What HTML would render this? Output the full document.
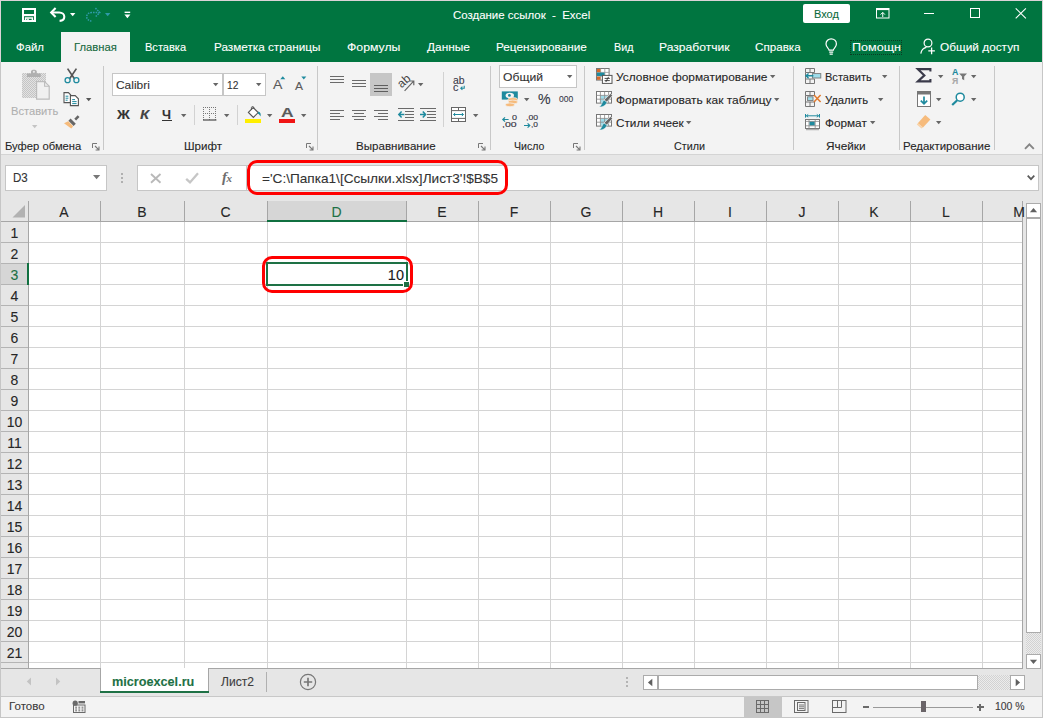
<!DOCTYPE html><html lang="ru"><head><meta charset="utf-8"><title>Создание ссылок - Excel</title><style>
*{box-sizing:border-box;margin:0;padding:0}
html,body{width:1043px;height:718px;overflow:hidden;background:#e6e6e6;font-family:"Liberation Sans","DejaVu Sans",sans-serif;font-size:12px;color:#262626}
#w{position:absolute;left:0;top:0;width:1043px;height:718px;overflow:hidden;background:#e6e6e6}
.a{position:absolute}
.t{position:absolute;white-space:pre;line-height:1;transform-origin:0 50%;-webkit-text-stroke:0.1px currentColor}
svg{position:absolute;overflow:visible}
</style></head><body><div id="w">
<div class="a" style="left:0px;top:0px;width:1043px;height:62px;background:#007540;"></div>
<div class="a" style="left:61px;top:32px;width:69px;height:30px;background:#f3f3f3;"></div>
<div class="a" style="left:0px;top:62px;width:1043px;height:92px;background:#f3f3f3;"></div>
<div class="a" style="left:0px;top:154px;width:1043px;height:1px;background:#d4d4d4;"></div>
<div class="a" style="left:103px;top:66px;width:1px;height:84px;background:#c8c8c8;"></div>
<div class="a" style="left:317px;top:66px;width:1px;height:84px;background:#c8c8c8;"></div>
<div class="a" style="left:490px;top:66px;width:1px;height:84px;background:#c8c8c8;"></div>
<div class="a" style="left:584px;top:66px;width:1px;height:84px;background:#c8c8c8;"></div>
<div class="a" style="left:793px;top:66px;width:1px;height:84px;background:#c8c8c8;"></div>
<div class="a" style="left:899px;top:66px;width:1px;height:84px;background:#c8c8c8;"></div>
<div class="a" style="left:994px;top:66px;width:1px;height:84px;background:#c8c8c8;"></div>
<svg style="left:22px;top:8px" width="14" height="14"><path d="M1 1H13V13H1Z" fill="none" stroke="#fff" stroke-width="2"/><rect x="1" y="6" width="12" height="2.2" fill="#fff"/><path d="M3.6 13V10H10.4V13" fill="none" stroke="#fff" stroke-width="1.5"/><rect x="5.2" y="10.6" width="1.6" height="2.4" fill="#fff"/></svg>
<svg style="left:50px;top:7px" width="16" height="15"><path d="M1.2 5.5H9.2C12.4 5.5 14.3 7.5 14.3 9.8C14.3 12.1 12.6 13.7 9.6 13.9" fill="none" stroke="#fff" stroke-width="2.1"/><path d="M5.6 1.1L1.2 5.5L5.6 9.9" fill="none" stroke="#fff" stroke-width="2.1"/></svg>
<svg style="left:70px;top:13px" width="6" height="4"><path d="M0 0H5.4L2.7 3.2Z" fill="#fff"/></svg>
<svg style="left:85px;top:7px" width="16" height="15"><path d="M14.8 5.5H6.8C3.6 5.5 1.7 7.5 1.7 9.8C1.7 12.1 3.4 13.7 6.4 13.9" fill="none" stroke="#2f9aa8" stroke-width="1.5" stroke-dasharray="1.6 1"/><path d="M10.4 1.1L14.8 5.5L10.4 9.9" fill="none" stroke="#2f9aa8" stroke-width="1.5" stroke-dasharray="1.6 1"/></svg>
<svg style="left:105px;top:13px" width="6" height="4"><path d="M0 0H5.4L2.7 3.2Z" fill="#2f9aa8"/></svg>
<svg style="left:124px;top:11px" width="7" height="8"><rect x="0.6" y="0.6" width="5.6" height="1.4" fill="#fff"/><path d="M0.4 3.6H6.4L3.4 7.2Z" fill="#fff"/></svg>
<div class="t" style="left:452.8px;top:5px;height:20px;line-height:20px;font-size:11.5px;color:#ffffff;transform:scaleX(0.9954);">Создание ссылок  -  Excel</div>
<div class="a" style="left:803px;top:4px;width:47px;height:19px;background:#ffffff;border-radius:2px"></div>
<div class="t" style="left:814.3px;top:3.5999999999999996px;height:20px;line-height:20px;font-size:11.5px;color:#0b6a3c;transform:scaleX(0.9571);">Вход</div>
<svg style="left:876px;top:8px" width="14" height="11"><rect x="0.5" y="0.5" width="12.5" height="9.5" fill="none" stroke="#fff"/><rect x="0.5" y="0.5" width="12.5" height="1.6" fill="#fff"/><path d="M6.75 9V4.6M4.6 6.6L6.75 4.4L8.9 6.6" fill="none" stroke="#fff" stroke-width="1"/></svg>
<div class="a" style="left:924px;top:13px;width:10px;height:1px;background:#ffffff;"></div>
<div class="a" style="left:970px;top:8px;width:10px;height:10px;background:transparent;border:1px solid #fff"></div>
<svg style="left:1015px;top:8px" width="12" height="11"><path d="M0.7 0.3L10.9 10.3M10.9 0.3L0.7 10.3" stroke="#fff" stroke-width="1.1" fill="none"/></svg>
<div class="t" style="left:15.6px;top:36.8px;height:20px;line-height:20px;font-size:11.5px;color:#ffffff;transform:scaleX(0.9901);">Файл</div>
<div class="t" style="left:73.5px;top:36.8px;height:20px;line-height:20px;font-size:11.5px;color:#14683c;transform:scaleX(0.9799);">Главная</div>
<div class="t" style="left:144.6px;top:36.8px;height:20px;line-height:20px;font-size:11.5px;color:#ffffff;transform:scaleX(0.9614);">Вставка</div>
<div class="t" style="left:213.6px;top:36.8px;height:20px;line-height:20px;font-size:11.5px;color:#ffffff;transform:scaleX(1.0199);">Разметка страницы</div>
<div class="t" style="left:347.2px;top:36.8px;height:20px;line-height:20px;font-size:11.5px;color:#ffffff;transform:scaleX(1.0670);">Формулы</div>
<div class="t" style="left:427px;top:36.8px;height:20px;line-height:20px;font-size:11.5px;color:#ffffff;transform:scaleX(1.0346);">Данные</div>
<div class="t" style="left:496.2px;top:36.8px;height:20px;line-height:20px;font-size:11.5px;color:#ffffff;transform:scaleX(1.0224);">Рецензирование</div>
<div class="t" style="left:613.6px;top:36.8px;height:20px;line-height:20px;font-size:11.5px;color:#ffffff;transform:scaleX(0.9321);">Вид</div>
<div class="t" style="left:659px;top:36.8px;height:20px;line-height:20px;font-size:11.5px;color:#ffffff;transform:scaleX(1.0525);">Разработчик</div>
<div class="t" style="left:755.3px;top:36.8px;height:20px;line-height:20px;font-size:11.5px;color:#ffffff;transform:scaleX(1.0127);">Справка</div>
<div class="t" style="left:851.5px;top:36.8px;height:20px;line-height:20px;font-size:11.5px;color:#ffffff;transform:scaleX(1.0920);">Помощн</div>
<div class="t" style="left:939.7px;top:36.8px;height:20px;line-height:20px;font-size:11.5px;color:#ffffff;transform:scaleX(1.0289);">Общий доступ</div>
<div class="a" style="left:850px;top:40px;width:52px;height:15px;background:transparent;border:1px dotted #0a3b22"></div>
<svg style="left:825px;top:38px" width="13" height="18"><path d="M4.1 12.2C4.1 10.4 1 9.2 1 5.9C1 3 3.3 0.8 6.2 0.8C9.1 0.8 11.4 3 11.4 5.9C11.4 9.2 8.3 10.4 8.3 12.2Z" fill="none" stroke="#fff" stroke-width="1.2"/><path d="M4.2 14.2H8.2M4.6 16.2H7.8" stroke="#fff" stroke-width="1.2"/></svg>
<svg style="left:920px;top:38px" width="16" height="17"><circle cx="8" cy="5" r="3.9" fill="none" stroke="#fff" stroke-width="1.2"/><path d="M0.8 15.6C1.4 11.8 3.8 9.9 6.4 9.4" fill="none" stroke="#fff" stroke-width="1.2"/><path d="M11.6 9.6V16.2M8.3 12.9H14.9" stroke="#fff" stroke-width="1.3"/></svg>
<div class="a" style="left:22px;top:73px;width:24px;height:25px;background:#d0d0d0;background-image:repeating-conic-gradient(#c4c4c4 0 25%,#e2e2e2 0 50%);background-size:2px 2px"></div>
<svg style="left:27px;top:69px" width="14" height="8"><path d="M0 8V4.4H4V2.6C4 0 9.8 0 9.8 2.6V4.4H13.8V8Z" fill="#b0b0b0"/><circle cx="6.9" cy="2.8" r="1.1" fill="#e8e8e8"/></svg>
<svg style="left:36px;top:81px" width="14" height="19"><path d="M0.6 0.6H8.6L13.2 5.2V18.2H0.6Z" fill="#f0f0f0" stroke="#bcbcbc" stroke-width="1.2"/><path d="M8.6 0.6V5.2H13.2" fill="none" stroke="#bcbcbc" stroke-width="1.1"/></svg>
<div class="t" style="left:10.6px;top:100.8px;height:20px;line-height:20px;font-size:11.5px;color:#b0b0b0;transform:scaleX(0.9682);">Вставить</div>
<svg style="left:32px;top:125px" width="6.4" height="4.2"><path d="M0 0H5.4L2.7 3.2Z" fill="#c4c4c4"/></svg>
<svg style="left:64px;top:68px" width="16" height="16"><path d="M3.6 0.6L10.6 11M12.4 0.6L5.4 11" fill="none" stroke="#555" stroke-width="1.7"/><circle cx="3.6" cy="12.2" r="2.5" fill="none" stroke="#1e8a9e" stroke-width="1.3"/><circle cx="12.4" cy="12.2" r="2.5" fill="none" stroke="#1e8a9e" stroke-width="1.3"/></svg>
<svg style="left:63px;top:92px" width="17" height="15"><path d="M1 0.6H5.4L7.6 2.8V10.6H1Z" fill="#fff" stroke="#555" stroke-width="1.1"/><path d="M2.6 4.2H5.4M2.6 6.2H5.4M2.6 8.2H4.6" stroke="#1e8a9e" stroke-width="1"/><path d="M7.4 3.6H12.2L15.4 6.8V13.6H7.4Z" fill="#fff" stroke="#555" stroke-width="1.1"/><path d="M9.2 7.6H12M9.2 9.6H13.6M9.2 11.6H13.6" stroke="#1e8a9e" stroke-width="1"/></svg>
<svg style="left:86px;top:98px" width="6.4" height="4.2"><path d="M0 0H5.4L2.7 3.2Z" fill="#555"/></svg>
<svg style="left:63px;top:114px" width="18" height="16"><path d="M12.2 5.6L15.6 2.2" stroke="#666" stroke-width="2.6" fill="none"/><path d="M7.6 4.6L12.8 9.8L10.6 12L5.4 6.8Z" fill="#666"/><path d="M5.2 7.2L10.2 12.2L8.4 14.6L6.8 13.4L1 9.2Z" fill="#f6bb7c"/></svg>
<div class="t" style="left:5.2px;top:136px;height:20px;line-height:20px;font-size:11.5px;color:#262626;transform:scaleX(0.9762);">Буфер обмена</div>
<svg style="left:92px;top:143px" width="8" height="8"><path d="M0.5 5V0.5H5" fill="none" stroke="#777" stroke-width="1"/><path d="M3 3L6.6 6.6M7 3.6V7H3.6" fill="none" stroke="#777" stroke-width="1.1"/></svg>
<div class="a" style="left:112px;top:73px;width:111px;height:23px;background:#ffffff;border:1px solid #c6c6c6"></div>
<div class="a" style="left:223px;top:73px;width:43px;height:23px;background:#ffffff;border:1px solid #c6c6c6"></div>
<div class="t" style="left:115.5px;top:74.8px;height:20px;line-height:20px;font-size:11.5px;color:#333;transform:scaleX(1.0370);">Calibri</div>
<svg style="left:213px;top:83px" width="6.4" height="4.2"><path d="M0 0H5.4L2.7 3.2Z" fill="#666"/></svg>
<div class="t" style="left:226.8px;top:74.8px;height:20px;line-height:20px;font-size:11px;color:#333;transform:scaleX(0.9306);">12</div>
<svg style="left:256px;top:83px" width="6.4" height="4.2"><path d="M0 0H5.4L2.7 3.2Z" fill="#666"/></svg>
<div class="t" style="left:272.6px;top:75px;height:20px;line-height:20px;font-size:13px;color:#5a5a5a;transform:scaleX(1.0840);">A</div>
<svg style="left:280px;top:76px" width="6" height="4"><path d="M0.3 3.2H5.3L2.8 0.2Z" fill="#1e8a9e"/></svg>
<div class="t" style="left:294.8px;top:76px;height:20px;line-height:20px;font-size:10.5px;color:#5a5a5a;transform:scaleX(1.1403);">A</div>
<svg style="left:301px;top:76px" width="6" height="4"><path d="M0.3 0.4H5.3L2.8 3.4Z" fill="#1e8a9e"/></svg>
<div class="t" style="left:116.6px;top:104.5px;height:20px;line-height:20px;font-size:13px;color:#333;font-weight:bold;transform:scaleX(1.0894);">Ж</div>
<div class="t" style="left:139.8px;top:104.5px;height:20px;line-height:20px;font-size:13px;color:#444;font-weight:bold;font-style:italic;transform:scaleX(1.1500);">К</div>
<div class="t" style="left:162.4px;top:104.5px;height:20px;line-height:20px;font-size:13px;color:#333;font-weight:bold;transform:scaleX(0.9846);">Ч</div>
<div class="a" style="left:162px;top:120px;width:10px;height:1px;background:#333;"></div>
<svg style="left:181px;top:114px" width="6.4" height="4.2"><path d="M0 0H5.4L2.7 3.2Z" fill="#666"/></svg>
<div class="a" style="left:194px;top:105px;width:1px;height:20px;background:#d2d2d2;"></div>
<svg style="left:203px;top:107px" width="14" height="14"><path shape-rendering="crispEdges" d="M0 0.5H13M0 6.5H13M0.5 0V13M6.5 0V13M12.5 0V13" fill="none" stroke="#777" stroke-width="1" stroke-dasharray="1 1"/><path d="M0 13H13.4" stroke="#555" stroke-width="1.3"/></svg>
<svg style="left:224px;top:114px" width="6.4" height="4.2"><path d="M0 0H5.4L2.7 3.2Z" fill="#666"/></svg>
<div class="a" style="left:237px;top:105px;width:1px;height:20px;background:#d2d2d2;"></div>
<svg style="left:245px;top:106px" width="18" height="13"><path d="M3.4 6.4L8.2 1.6L13.2 6.6L8.4 11.4Z" fill="#fff" stroke="#555" stroke-width="1.1"/><path d="M6.4 4V1.6C6.4 0.2 8.8 0.2 8.8 1.6V3" fill="none" stroke="#555" stroke-width="1"/><path d="M13.4 5.4C15.6 6.2 16.2 8.4 15.4 10.4C14.8 9 14.2 8 12.6 7.4Z" fill="#1e8a9e"/></svg>
<div class="a" style="left:245px;top:119px;width:16px;height:4px;background:#ffef00;"></div>
<svg style="left:267px;top:114px" width="6.4" height="4.2"><path d="M0 0H5.4L2.7 3.2Z" fill="#666"/></svg>
<div class="t" style="left:280.8px;top:103.2px;height:20px;line-height:20px;font-size:13.5px;color:#5a5a5a;font-weight:bold;transform:scaleX(1.2923);">A</div>
<div class="a" style="left:279px;top:119px;width:16px;height:4px;background:#f01414;"></div>
<svg style="left:301px;top:114px" width="6.4" height="4.2"><path d="M0 0H5.4L2.7 3.2Z" fill="#666"/></svg>
<div class="t" style="left:183.6px;top:136px;height:20px;line-height:20px;font-size:11.5px;color:#262626;transform:scaleX(1.0041);">Шрифт</div>
<svg style="left:306px;top:143px" width="8" height="8"><path d="M0.5 5V0.5H5" fill="none" stroke="#777" stroke-width="1"/><path d="M3 3L6.6 6.6M7 3.6V7H3.6" fill="none" stroke="#777" stroke-width="1.1"/></svg>
<div class="a" style="left:330px;top:76px;width:14px;height:1px;background:#6a6a6a;"></div>
<div class="a" style="left:330px;top:79px;width:14px;height:1px;background:#6a6a6a;"></div>
<div class="a" style="left:330px;top:82px;width:14px;height:1px;background:#6a6a6a;"></div>
<div class="a" style="left:352px;top:80px;width:14px;height:1px;background:#6a6a6a;"></div>
<div class="a" style="left:352px;top:83px;width:14px;height:1px;background:#6a6a6a;"></div>
<div class="a" style="left:352px;top:86px;width:14px;height:1px;background:#6a6a6a;"></div>
<div class="a" style="left:370px;top:73px;width:22px;height:23px;background:#c6c6c6;"></div>
<div class="a" style="left:374px;top:85px;width:14px;height:1px;background:#5e5e5e;"></div>
<div class="a" style="left:374px;top:88px;width:14px;height:1px;background:#5e5e5e;"></div>
<div class="a" style="left:374px;top:91px;width:14px;height:1px;background:#5e5e5e;"></div>
<svg style="left:397px;top:75px" width="18" height="17"><text x="0" y="0" transform="translate(4.6,13.4) rotate(-42)" font-family="Liberation Sans,sans-serif" font-size="12" fill="#444">ab</text><path d="M7.6 15.8L16.4 6.4M16.8 10.2V6H12.6" fill="none" stroke="#666" stroke-width="1.2"/></svg>
<svg style="left:418px;top:83px" width="6.4" height="4.2"><path d="M0 0H5.4L2.7 3.2Z" fill="#666"/></svg>
<div class="a" style="left:443px;top:72px;width:1px;height:55px;background:#d2d2d2;"></div>
<div class="t" style="left:453px;top:70.6px;height:20px;line-height:20px;font-size:10.4px;color:#3a3a4a;transform:scaleX(1.0032);">ab</div>
<div class="t" style="left:453px;top:78.2px;height:20px;line-height:20px;font-size:10.4px;color:#3a3a4a;transform:scaleX(1.0378);">c</div>
<svg style="left:460px;top:85px" width="6" height="6"><path d="M4.2 0.8V3.2H1M2.4 1.6L0.8 3.2L2.4 4.8" fill="none" stroke="#1e8a9e" stroke-width="1.1"/></svg>
<div class="a" style="left:330px;top:110px;width:14px;height:1px;background:#6a6a6a;"></div>
<div class="a" style="left:330px;top:113px;width:10px;height:1px;background:#6a6a6a;"></div>
<div class="a" style="left:330px;top:116px;width:14px;height:1px;background:#6a6a6a;"></div>
<div class="a" style="left:330px;top:119px;width:10px;height:1px;background:#6a6a6a;"></div>
<div class="a" style="left:352px;top:110px;width:14px;height:1px;background:#6a6a6a;"></div>
<div class="a" style="left:354px;top:113px;width:10px;height:1px;background:#6a6a6a;"></div>
<div class="a" style="left:352px;top:116px;width:14px;height:1px;background:#6a6a6a;"></div>
<div class="a" style="left:354px;top:119px;width:10px;height:1px;background:#6a6a6a;"></div>
<div class="a" style="left:374px;top:110px;width:14px;height:1px;background:#6a6a6a;"></div>
<div class="a" style="left:378px;top:113px;width:10px;height:1px;background:#6a6a6a;"></div>
<div class="a" style="left:374px;top:116px;width:14px;height:1px;background:#6a6a6a;"></div>
<div class="a" style="left:378px;top:119px;width:10px;height:1px;background:#6a6a6a;"></div>
<div class="a" style="left:398px;top:108px;width:16px;height:1px;background:#6a6a6a;"></div>
<div class="a" style="left:405px;top:111px;width:9px;height:1px;background:#6a6a6a;"></div>
<div class="a" style="left:405px;top:114px;width:9px;height:1px;background:#6a6a6a;"></div>
<div class="a" style="left:405px;top:117px;width:9px;height:1px;background:#6a6a6a;"></div>
<div class="a" style="left:398px;top:120px;width:16px;height:1px;background:#6a6a6a;"></div>
<svg style="left:398px;top:110px" width="7" height="9"><path d="M6.4 4.5H1M3.6 1.4L0.8 4.5L3.6 7.6" fill="none" stroke="#1e8a9e" stroke-width="1.5"/></svg>
<div class="a" style="left:420px;top:108px;width:16px;height:1px;background:#6a6a6a;"></div>
<div class="a" style="left:427px;top:111px;width:9px;height:1px;background:#6a6a6a;"></div>
<div class="a" style="left:427px;top:114px;width:9px;height:1px;background:#6a6a6a;"></div>
<div class="a" style="left:427px;top:117px;width:9px;height:1px;background:#6a6a6a;"></div>
<div class="a" style="left:420px;top:120px;width:16px;height:1px;background:#6a6a6a;"></div>
<svg style="left:420px;top:110px" width="7" height="9"><path d="M0 4.5H5.4M2.8 1.4L5.6 4.5L2.8 7.6" fill="none" stroke="#1e8a9e" stroke-width="1.5"/></svg>
<svg style="left:451px;top:107px" width="16" height="15"><rect x="0.5" y="0.5" width="14" height="14" fill="#fff" stroke="#666"/><path d="M0.5 3.6H14.5M0.5 11.4H14.5M7.5 0.5V3.6M7.5 11.4V14.5" stroke="#666" stroke-width="1" fill="none"/><path d="M2.6 7.5H12.4M4.2 5.9L2.6 7.5L4.2 9.1M10.8 5.9L12.4 7.5L10.8 9.1" stroke="#1e8a9e" stroke-width="1" fill="none"/></svg>
<svg style="left:473px;top:114px" width="6.4" height="4.2"><path d="M0 0H5.4L2.7 3.2Z" fill="#666"/></svg>
<div class="t" style="left:356px;top:136px;height:20px;line-height:20px;font-size:11.5px;color:#262626;transform:scaleX(1.0054);">Выравнивание</div>
<svg style="left:478px;top:143px" width="8" height="8"><path d="M0.5 5V0.5H5" fill="none" stroke="#777" stroke-width="1"/><path d="M3 3L6.6 6.6M7 3.6V7H3.6" fill="none" stroke="#777" stroke-width="1.1"/></svg>
<div class="a" style="left:499px;top:65px;width:78px;height:23px;background:#ffffff;border:1px solid #c6c6c6"></div>
<div class="t" style="left:502.6px;top:67.2px;height:20px;line-height:20px;font-size:11.5px;color:#333;transform:scaleX(1.0570);">Общий</div>
<svg style="left:567px;top:75px" width="6.4" height="4.2"><path d="M0 0H5.4L2.7 3.2Z" fill="#666"/></svg>
<svg style="left:501px;top:91px" width="18" height="17"><rect x="0.8" y="0.4" width="16" height="8.2" fill="#1e8a9e"/><ellipse cx="8.8" cy="4.5" rx="4.2" ry="2.8" fill="#f3f3f3"/><circle cx="8.4" cy="4.4" r="1.4" fill="#1e8a9e"/><ellipse cx="11.8" cy="8.4" rx="4.8" ry="1.9" fill="#f6bb7c" stroke="#f3f3f3" stroke-width="0.7"/><ellipse cx="11.8" cy="11" rx="4.8" ry="1.9" fill="#f6bb7c" stroke="#f3f3f3" stroke-width="0.7"/><ellipse cx="9" cy="13.8" rx="4.6" ry="1.9" fill="#f6bb7c" stroke="#f3f3f3" stroke-width="0.7"/></svg>
<svg style="left:523.5px;top:98px" width="6.4" height="4.2"><path d="M0 0H5.4L2.7 3.2Z" fill="#666"/></svg>
<div class="t" style="left:538.4px;top:89.2px;height:20px;line-height:20px;font-size:15.5px;color:#333844;transform:scaleX(0.9133);">%</div>
<div class="t" style="left:559px;top:88.8px;height:20px;line-height:20px;font-size:9.5px;color:#3a3a4a;transform:scaleX(0.8954);">000</div>
<svg style="left:502px;top:117px" width="7" height="5"><path d="M6.6 2.5H1M3 0.4L0.8 2.5L3 4.6" fill="none" stroke="#1e8a9e" stroke-width="1.2"/></svg>
<div class="t" style="left:511.6px;top:108px;height:20px;line-height:20px;font-size:7.8px;color:#2c2c3a;transform:scaleX(1.1511);">0</div>
<div class="t" style="left:502px;top:115.4px;height:20px;line-height:20px;font-size:7.8px;color:#2c2c3a;transform:scaleX(1.3464);">,00</div>
<div class="t" style="left:526px;top:108px;height:20px;line-height:20px;font-size:7.8px;color:#2c2c3a;transform:scaleX(1.1066);">,00</div>
<svg style="left:524px;top:123px" width="7" height="5"><path d="M0 2.5H5.6M3.6 0.4L5.8 2.5L3.6 4.6" fill="none" stroke="#1e8a9e" stroke-width="1.2"/></svg>
<div class="t" style="left:531px;top:115.4px;height:20px;line-height:20px;font-size:7.8px;color:#2c2c3a;transform:scaleX(1.0743);">,0</div>
<div class="t" style="left:513.6px;top:136px;height:20px;line-height:20px;font-size:11.5px;color:#262626;transform:scaleX(0.9190);">Число</div>
<svg style="left:572.6px;top:143px" width="8" height="8"><path d="M0.5 5V0.5H5" fill="none" stroke="#777" stroke-width="1"/><path d="M3 3L6.6 6.6M7 3.6V7H3.6" fill="none" stroke="#777" stroke-width="1.1"/></svg>
<svg style="left:596px;top:68px" width="17" height="16"><rect x="0.5" y="0.5" width="12.6" height="11.6" fill="#fff" stroke="#777"/><path d="M4.6 0.5V12M8.8 0.5V12M0.5 4.4H13M0.5 8.2H13" stroke="#999" stroke-width="0.8" fill="none"/><rect x="1" y="1" width="3.4" height="3.2" fill="#d6692a"/><rect x="1" y="4.6" width="7.6" height="3.4" fill="#1e8a9e"/><rect x="1" y="8.6" width="3.4" height="3.2" fill="#d6692a"/><rect x="6.4" y="7.4" width="9.6" height="8" fill="#fff" stroke="#555" stroke-width="1"/><path d="M8.6 10.4H13.8M8.6 12.6H13.8M12.6 8.8L9.8 14" stroke="#333" stroke-width="0.9" fill="none"/></svg>
<svg style="left:596px;top:91px" width="17" height="17"><rect x="0.5" y="0.5" width="15" height="11.6" fill="#fff" stroke="#777"/><rect x="4.6" y="4.6" width="3.8" height="3.4" fill="#9fdcea"/><rect x="8.8" y="4.6" width="3.8" height="3.4" fill="#9fdcea"/><rect x="4.6" y="8.4" width="3.8" height="3.4" fill="#9fdcea"/><path d="M4.4 0.5V12M8.6 0.5V12M12.6 0.5V12M0.5 4.4H15.5M0.5 8.2H15.5" stroke="#888" stroke-width="0.8" fill="none"/><path d="M16.4 4.6L10.8 11.2L8 9L14.6 2.6Z" fill="#666" stroke="#f3f3f3" stroke-width="0.7"/><path d="M11 11.2C10 14.6 6.6 16.2 3.4 16C5.6 14.6 5.6 12 7.8 9Z" fill="#1e8a9e" stroke="#f3f3f3" stroke-width="0.5"/></svg>
<svg style="left:596px;top:114px" width="17" height="17"><rect x="0.5" y="0.5" width="15" height="11.6" fill="#fff" stroke="#777"/><rect x="4.6" y="4.6" width="8" height="7" fill="#9fdcea"/><path d="M4.4 0.5V12M8.6 0.5V12M12.6 0.5V12M0.5 4.4H15.5M0.5 8.2H15.5" stroke="#888" stroke-width="0.8" fill="none"/><path d="M16.4 4.6L10.8 11.2L8 9L14.6 2.6Z" fill="#666" stroke="#f3f3f3" stroke-width="0.7"/><path d="M11 11.2C10 14.6 6.6 16.2 3.4 16C5.6 14.6 5.6 12 7.8 9Z" fill="#1e8a9e" stroke="#f3f3f3" stroke-width="0.5"/></svg>
<div class="t" style="left:615.5px;top:66.9px;height:20px;line-height:20px;font-size:11.5px;color:#262626;transform:scaleX(1.0355);">Условное форматирование</div>
<svg style="left:770px;top:74.5px" width="6.4" height="4.2"><path d="M0 0H5.4L2.7 3.2Z" fill="#666"/></svg>
<div class="t" style="left:615.5px;top:90px;height:20px;line-height:20px;font-size:11.5px;color:#262626;transform:scaleX(1.0393);">Форматировать как таблицу</div>
<svg style="left:774px;top:97.5px" width="6.4" height="4.2"><path d="M0 0H5.4L2.7 3.2Z" fill="#666"/></svg>
<div class="t" style="left:615.5px;top:113px;height:20px;line-height:20px;font-size:11.5px;color:#262626;transform:scaleX(1.0200);">Стили ячеек</div>
<svg style="left:686.4px;top:120.5px" width="6.4" height="4.2"><path d="M0 0H5.4L2.7 3.2Z" fill="#666"/></svg>
<div class="t" style="left:673.6px;top:136px;height:20px;line-height:20px;font-size:11.5px;color:#262626;transform:scaleX(0.9354);">Стили</div>
<svg style="left:805px;top:68px" width="17" height="16"><path d="M0.5 0.5H9.5V4.5H0.5ZM5 0.5V4.5M0.5 11H9.5V15.5H0.5ZM5 11V15.5M0.5 4.5V11" fill="none" stroke="#777" stroke-width="1"/><rect x="7.4" y="5.6" width="8.4" height="4.4" fill="#9fdcea" stroke="#777" stroke-width="0.9"/><path d="M8.4 7.8H1.2M3.6 5.4L1 7.8L3.6 10.2" fill="none" stroke="#1e8a9e" stroke-width="1.4"/></svg>
<svg style="left:805px;top:91px" width="17" height="16"><path d="M0.5 0.5H9.5V4.5H0.5ZM5 0.5V4.5M0.5 11H9.5V15.5H0.5ZM5 11V15.5M0.5 4.5V11" fill="none" stroke="#777" stroke-width="1"/><rect x="2.6" y="5.8" width="5.4" height="3.8" fill="#9fdcea" stroke="#777" stroke-width="0.9"/><path d="M9 4L15.6 11M15.6 4L9 11" fill="none" stroke="#e07a2e" stroke-width="1.5"/></svg>
<svg style="left:805px;top:114px" width="16" height="16"><path d="M0.5 0V3.6M14.5 0V3.6M1.4 1.8H13.6M3.2 0.4L1.4 1.8L3.2 3.2M11.8 0.4L13.6 1.8L11.8 3.2" fill="none" stroke="#1e8a9e" stroke-width="1"/><rect x="0.5" y="5.5" width="14" height="9" fill="#fff" stroke="#777"/><rect x="4.4" y="7.4" width="5.4" height="4.2" fill="#1e8a9e"/><path d="M4 5.5V14.5M10.2 5.5V14.5M0.5 7.4H14.5M0.5 11.8H14.5" stroke="#888" stroke-width="0.8" fill="none"/><path d="M1 15.7H14" stroke="#888" stroke-width="0.8"/></svg>
<div class="t" style="left:824.8px;top:66.9px;height:20px;line-height:20px;font-size:11.5px;color:#262626;transform:scaleX(0.9600);">Вставить</div>
<svg style="left:881.8px;top:74.5px" width="6.4" height="4.2"><path d="M0 0H5.4L2.7 3.2Z" fill="#666"/></svg>
<div class="t" style="left:824.8px;top:90px;height:20px;line-height:20px;font-size:11.5px;color:#262626;transform:scaleX(0.9794);">Удалить</div>
<svg style="left:878px;top:97.5px" width="6.4" height="4.2"><path d="M0 0H5.4L2.7 3.2Z" fill="#666"/></svg>
<div class="t" style="left:824.8px;top:113px;height:20px;line-height:20px;font-size:11.5px;color:#262626;transform:scaleX(1.0230);">Формат</div>
<svg style="left:870.2px;top:120.5px" width="6.4" height="4.2"><path d="M0 0H5.4L2.7 3.2Z" fill="#666"/></svg>
<div class="t" style="left:826px;top:136px;height:20px;line-height:20px;font-size:11.5px;color:#262626;transform:scaleX(1.0265);">Ячейки</div>
<svg style="left:916px;top:68px" width="16" height="15"><path d="M14.4 3.4V1.1H1.8L8.4 7.4L1.8 13.4H14.4V11" fill="none" stroke="#3a3a4a" stroke-width="2.1"/></svg>
<svg style="left:938px;top:74.5px" width="6.4" height="4.2"><path d="M0 0H5.4L2.7 3.2Z" fill="#666"/></svg>
<div class="t" style="left:952px;top:61.8px;height:20px;line-height:20px;font-size:9.5px;color:#1e8a9e;font-weight:bold;transform:scaleX(0.9309);">A</div>
<div class="t" style="left:952px;top:70.8px;height:20px;line-height:20px;font-size:9.5px;color:#a8a8a8;font-weight:bold;transform:scaleX(0.9080);">Я</div>
<svg style="left:959px;top:73px" width="9" height="8"><path d="M0.2 0.4H8L5.2 3.6V7.2L3 6V3.6Z" fill="#777"/></svg>
<svg style="left:971px;top:74.5px" width="6.4" height="4.2"><path d="M0 0H5.4L2.7 3.2Z" fill="#666"/></svg>
<svg style="left:917px;top:91px" width="14" height="16"><rect x="0.5" y="0.5" width="13" height="15" fill="#fff" stroke="#777"/><rect x="0.5" y="0.5" width="13" height="3" fill="#777"/><path d="M7 5.6V12.6M3.8 9.6L7 12.8L10.2 9.6" fill="none" stroke="#1e8a9e" stroke-width="1.7"/></svg>
<svg style="left:936px;top:97.5px" width="6.4" height="4.2"><path d="M0 0H5.4L2.7 3.2Z" fill="#666"/></svg>
<svg style="left:951px;top:92px" width="15" height="14"><circle cx="9.2" cy="5.2" r="4" fill="#fff" stroke="#1e8a9e" stroke-width="1.5"/><path d="M6.2 8.2L1.2 13" stroke="#1e8a9e" stroke-width="2.2" fill="none"/></svg>
<svg style="left:971px;top:97.5px" width="6.4" height="4.2"><path d="M0 0H5.4L2.7 3.2Z" fill="#666"/></svg>
<svg style="left:916px;top:114px" width="16" height="15"><path d="M9.2 1L14.4 5.4L7 13.6L1.8 9.2Z" fill="#f6bb7c"/><path d="M1.8 9.2L7 13.6L5.4 14.6L0.8 10.6Z" fill="#f9d3a8"/></svg>
<svg style="left:936px;top:120.5px" width="6.4" height="4.2"><path d="M0 0H5.4L2.7 3.2Z" fill="#666"/></svg>
<div class="t" style="left:903.2px;top:136px;height:20px;line-height:20px;font-size:11.5px;color:#262626;transform:scaleX(0.9965);">Редактирование</div>
<svg style="left:1024px;top:143px" width="11" height="7"><path d="M1 5.8L5.4 1.4L9.8 5.8" fill="none" stroke="#858585" stroke-width="1.9"/></svg>
<div class="a" style="left:5px;top:165px;width:102px;height:26px;background:#ffffff;border:1px solid #c6c6c6"></div>
<div class="t" style="left:12.6px;top:168.4px;height:20px;line-height:20px;font-size:12.3px;color:#333333;transform:scaleX(0.9406);">D3</div>
<svg style="left:93px;top:175px" width="8" height="5"><path d="M0 0H7.2L3.6 4.2Z" fill="#777"/></svg>
<div class="a" style="left:121px;top:173px;width:2px;height:2px;background:#b0b0b0;"></div>
<div class="a" style="left:121px;top:177px;width:2px;height:2px;background:#b0b0b0;"></div>
<div class="a" style="left:121px;top:181px;width:2px;height:2px;background:#b0b0b0;"></div>
<div class="a" style="left:137px;top:165px;width:110px;height:26px;background:#ffffff;border:1px solid #c6c6c6"></div>
<div class="a" style="left:246px;top:165px;width:793px;height:26px;background:#ffffff;border:1px solid #c6c6c6"></div>
<svg style="left:150px;top:173px" width="12" height="11"><path d="M1 1L10.5 9.7M10.5 1L1 9.7" stroke="#b9b9b9" stroke-width="1.9" fill="none"/></svg>
<svg style="left:185px;top:172px" width="15" height="12"><path d="M1.2 6.8L5 10.4L13 1.2" stroke="#c6c6c6" stroke-width="2.3" fill="none"/></svg>
<div class="t" style="left:222px;top:167px;height:20px;line-height:20px;font-family:'Liberation Serif',serif;font-style:italic;font-weight:bold;font-size:15px;color:#6e6e6e;letter-spacing:-0.6px;-webkit-text-stroke:0">f<span style="font-size:11px">x</span></div>
<svg style="left:1027px;top:175px" width="8" height="6"><path d="M0.7 0.7L4 4.2L7.3 0.7" stroke="#5a5a5a" stroke-width="1.7" fill="none"/></svg>
<div class="a" style="left:247px;top:160px;width:261px;height:35px;background:transparent;border:3px solid #ff0000;border-radius:10px"></div>
<div class="t" style="left:262.3px;top:168.5px;height:20px;line-height:20px;font-size:13.5px;color:#333333;transform:scaleX(1.0088);">='C:\Папка1\[Ссылки.xlsx]Лист3'!$B$5</div>
<div class="a" style="left:1px;top:222px;width:1022px;height:446px;background:#ffffff;"></div>
<div class="a" style="left:1px;top:201px;width:1022px;height:21px;background:#e6e6e6;"></div>
<div class="a" style="left:1px;top:222px;width:27px;height:446px;background:#e6e6e6;"></div>
<div class="a" style="left:268px;top:201px;width:138px;height:19px;background:#d6d6d6;"></div>
<div class="a" style="left:267px;top:220px;width:140px;height:2px;background:#107040;"></div>
<div class="a" style="left:1px;top:264px;width:26px;height:20px;background:#d6d6d6;"></div>
<div class="a" style="left:27px;top:263px;width:2px;height:22px;background:#107040;"></div>
<div class="a" style="left:29px;top:242px;width:993px;height:1px;background:#d4d4d4;"></div>
<div class="a" style="left:1px;top:242px;width:27px;height:1px;background:#b4b4b4;"></div>
<div class="a" style="left:29px;top:263px;width:993px;height:1px;background:#d4d4d4;"></div>
<div class="a" style="left:1px;top:263px;width:27px;height:1px;background:#b4b4b4;"></div>
<div class="a" style="left:29px;top:284px;width:993px;height:1px;background:#d4d4d4;"></div>
<div class="a" style="left:1px;top:284px;width:27px;height:1px;background:#b4b4b4;"></div>
<div class="a" style="left:29px;top:305px;width:993px;height:1px;background:#d4d4d4;"></div>
<div class="a" style="left:1px;top:305px;width:27px;height:1px;background:#b4b4b4;"></div>
<div class="a" style="left:29px;top:326px;width:993px;height:1px;background:#d4d4d4;"></div>
<div class="a" style="left:1px;top:326px;width:27px;height:1px;background:#b4b4b4;"></div>
<div class="a" style="left:29px;top:347px;width:993px;height:1px;background:#d4d4d4;"></div>
<div class="a" style="left:1px;top:347px;width:27px;height:1px;background:#b4b4b4;"></div>
<div class="a" style="left:29px;top:368px;width:993px;height:1px;background:#d4d4d4;"></div>
<div class="a" style="left:1px;top:368px;width:27px;height:1px;background:#b4b4b4;"></div>
<div class="a" style="left:29px;top:389px;width:993px;height:1px;background:#d4d4d4;"></div>
<div class="a" style="left:1px;top:389px;width:27px;height:1px;background:#b4b4b4;"></div>
<div class="a" style="left:29px;top:410px;width:993px;height:1px;background:#d4d4d4;"></div>
<div class="a" style="left:1px;top:410px;width:27px;height:1px;background:#b4b4b4;"></div>
<div class="a" style="left:29px;top:431px;width:993px;height:1px;background:#d4d4d4;"></div>
<div class="a" style="left:1px;top:431px;width:27px;height:1px;background:#b4b4b4;"></div>
<div class="a" style="left:29px;top:452px;width:993px;height:1px;background:#d4d4d4;"></div>
<div class="a" style="left:1px;top:452px;width:27px;height:1px;background:#b4b4b4;"></div>
<div class="a" style="left:29px;top:473px;width:993px;height:1px;background:#d4d4d4;"></div>
<div class="a" style="left:1px;top:473px;width:27px;height:1px;background:#b4b4b4;"></div>
<div class="a" style="left:29px;top:494px;width:993px;height:1px;background:#d4d4d4;"></div>
<div class="a" style="left:1px;top:494px;width:27px;height:1px;background:#b4b4b4;"></div>
<div class="a" style="left:29px;top:515px;width:993px;height:1px;background:#d4d4d4;"></div>
<div class="a" style="left:1px;top:515px;width:27px;height:1px;background:#b4b4b4;"></div>
<div class="a" style="left:29px;top:536px;width:993px;height:1px;background:#d4d4d4;"></div>
<div class="a" style="left:1px;top:536px;width:27px;height:1px;background:#b4b4b4;"></div>
<div class="a" style="left:29px;top:557px;width:993px;height:1px;background:#d4d4d4;"></div>
<div class="a" style="left:1px;top:557px;width:27px;height:1px;background:#b4b4b4;"></div>
<div class="a" style="left:29px;top:578px;width:993px;height:1px;background:#d4d4d4;"></div>
<div class="a" style="left:1px;top:578px;width:27px;height:1px;background:#b4b4b4;"></div>
<div class="a" style="left:29px;top:599px;width:993px;height:1px;background:#d4d4d4;"></div>
<div class="a" style="left:1px;top:599px;width:27px;height:1px;background:#b4b4b4;"></div>
<div class="a" style="left:29px;top:620px;width:993px;height:1px;background:#d4d4d4;"></div>
<div class="a" style="left:1px;top:620px;width:27px;height:1px;background:#b4b4b4;"></div>
<div class="a" style="left:29px;top:641px;width:993px;height:1px;background:#d4d4d4;"></div>
<div class="a" style="left:1px;top:641px;width:27px;height:1px;background:#b4b4b4;"></div>
<div class="a" style="left:29px;top:662px;width:993px;height:1px;background:#d4d4d4;"></div>
<div class="a" style="left:1px;top:662px;width:27px;height:1px;background:#b4b4b4;"></div>
<div class="a" style="left:100px;top:222px;width:1px;height:446px;background:#d4d4d4;"></div>
<div class="a" style="left:100px;top:201px;width:1px;height:20px;background:#a6a6a6;"></div>
<div class="a" style="left:184px;top:222px;width:1px;height:446px;background:#d4d4d4;"></div>
<div class="a" style="left:184px;top:201px;width:1px;height:20px;background:#a6a6a6;"></div>
<div class="a" style="left:267px;top:222px;width:1px;height:446px;background:#d4d4d4;"></div>
<div class="a" style="left:267px;top:201px;width:1px;height:20px;background:#a6a6a6;"></div>
<div class="a" style="left:406px;top:222px;width:1px;height:446px;background:#d4d4d4;"></div>
<div class="a" style="left:406px;top:201px;width:1px;height:20px;background:#a6a6a6;"></div>
<div class="a" style="left:478px;top:222px;width:1px;height:446px;background:#d4d4d4;"></div>
<div class="a" style="left:478px;top:201px;width:1px;height:20px;background:#a6a6a6;"></div>
<div class="a" style="left:550px;top:222px;width:1px;height:446px;background:#d4d4d4;"></div>
<div class="a" style="left:550px;top:201px;width:1px;height:20px;background:#a6a6a6;"></div>
<div class="a" style="left:622px;top:222px;width:1px;height:446px;background:#d4d4d4;"></div>
<div class="a" style="left:622px;top:201px;width:1px;height:20px;background:#a6a6a6;"></div>
<div class="a" style="left:694px;top:222px;width:1px;height:446px;background:#d4d4d4;"></div>
<div class="a" style="left:694px;top:201px;width:1px;height:20px;background:#a6a6a6;"></div>
<div class="a" style="left:766px;top:222px;width:1px;height:446px;background:#d4d4d4;"></div>
<div class="a" style="left:766px;top:201px;width:1px;height:20px;background:#a6a6a6;"></div>
<div class="a" style="left:838px;top:222px;width:1px;height:446px;background:#d4d4d4;"></div>
<div class="a" style="left:838px;top:201px;width:1px;height:20px;background:#a6a6a6;"></div>
<div class="a" style="left:910px;top:222px;width:1px;height:446px;background:#d4d4d4;"></div>
<div class="a" style="left:910px;top:201px;width:1px;height:20px;background:#a6a6a6;"></div>
<div class="a" style="left:982px;top:222px;width:1px;height:446px;background:#d4d4d4;"></div>
<div class="a" style="left:982px;top:201px;width:1px;height:20px;background:#a6a6a6;"></div>
<div class="a" style="left:28px;top:201px;width:1px;height:467px;background:#a6a6a6;"></div>
<div class="a" style="left:1px;top:221px;width:1022px;height:1px;background:#a6a6a6;"></div>
<div class="a" style="left:267px;top:220px;width:140px;height:2px;background:#107040;"></div>
<div class="a" style="left:27px;top:263px;width:2px;height:22px;background:#107040;"></div>
<div class="a" style="left:1022px;top:201px;width:1px;height:468px;background:#a6a6a6;"></div>
<div class="a" style="left:1px;top:668px;width:1022px;height:1px;background:#a6a6a6;"></div>
<svg style="left:12px;top:205px" width="14" height="13"><path d="M13 0V12.5H0.5Z" fill="#b2b2b2"/></svg>
<div class="t" style="left:28px;width:72px;top:204px;height:16px;line-height:16px;text-align:center;font-size:14px;color:#262626;overflow:hidden">A</div>
<div class="t" style="left:100px;width:84px;top:204px;height:16px;line-height:16px;text-align:center;font-size:14px;color:#262626;overflow:hidden">B</div>
<div class="t" style="left:184px;width:83px;top:204px;height:16px;line-height:16px;text-align:center;font-size:14px;color:#262626;overflow:hidden">C</div>
<div class="t" style="left:267px;width:139px;top:204px;height:16px;line-height:16px;text-align:center;font-size:14px;color:#1e7145;overflow:hidden">D</div>
<div class="t" style="left:406px;width:72px;top:204px;height:16px;line-height:16px;text-align:center;font-size:14px;color:#262626;overflow:hidden">E</div>
<div class="t" style="left:478px;width:72px;top:204px;height:16px;line-height:16px;text-align:center;font-size:14px;color:#262626;overflow:hidden">F</div>
<div class="t" style="left:550px;width:72px;top:204px;height:16px;line-height:16px;text-align:center;font-size:14px;color:#262626;overflow:hidden">G</div>
<div class="t" style="left:622px;width:72px;top:204px;height:16px;line-height:16px;text-align:center;font-size:14px;color:#262626;overflow:hidden">H</div>
<div class="t" style="left:694px;width:72px;top:204px;height:16px;line-height:16px;text-align:center;font-size:14px;color:#262626;overflow:hidden">I</div>
<div class="t" style="left:766px;width:72px;top:204px;height:16px;line-height:16px;text-align:center;font-size:14px;color:#262626;overflow:hidden">J</div>
<div class="t" style="left:838px;width:72px;top:204px;height:16px;line-height:16px;text-align:center;font-size:14px;color:#262626;overflow:hidden">K</div>
<div class="t" style="left:910px;width:72px;top:204px;height:16px;line-height:16px;text-align:center;font-size:14px;color:#262626;overflow:hidden">L</div>
<div class="t" style="left:982px;width:74px;top:204px;height:16px;line-height:16px;text-align:center;font-size:14px;color:#262626;overflow:hidden">M</div>
<div class="t" style="left:1px;width:27px;top:222px;height:21px;line-height:22px;text-align:center;font-size:14px;color:#262626">1</div>
<div class="t" style="left:1px;width:27px;top:243px;height:21px;line-height:22px;text-align:center;font-size:14px;color:#262626">2</div>
<div class="t" style="left:1px;width:27px;top:264px;height:21px;line-height:22px;text-align:center;font-size:14px;color:#1e7145">3</div>
<div class="t" style="left:1px;width:27px;top:285px;height:21px;line-height:22px;text-align:center;font-size:14px;color:#262626">4</div>
<div class="t" style="left:1px;width:27px;top:306px;height:21px;line-height:22px;text-align:center;font-size:14px;color:#262626">5</div>
<div class="t" style="left:1px;width:27px;top:327px;height:21px;line-height:22px;text-align:center;font-size:14px;color:#262626">6</div>
<div class="t" style="left:1px;width:27px;top:348px;height:21px;line-height:22px;text-align:center;font-size:14px;color:#262626">7</div>
<div class="t" style="left:1px;width:27px;top:369px;height:21px;line-height:22px;text-align:center;font-size:14px;color:#262626">8</div>
<div class="t" style="left:1px;width:27px;top:390px;height:21px;line-height:22px;text-align:center;font-size:14px;color:#262626">9</div>
<div class="t" style="left:1px;width:27px;top:411px;height:21px;line-height:22px;text-align:center;font-size:14px;color:#262626">10</div>
<div class="t" style="left:1px;width:27px;top:432px;height:21px;line-height:22px;text-align:center;font-size:14px;color:#262626">11</div>
<div class="t" style="left:1px;width:27px;top:453px;height:21px;line-height:22px;text-align:center;font-size:14px;color:#262626">12</div>
<div class="t" style="left:1px;width:27px;top:474px;height:21px;line-height:22px;text-align:center;font-size:14px;color:#262626">13</div>
<div class="t" style="left:1px;width:27px;top:495px;height:21px;line-height:22px;text-align:center;font-size:14px;color:#262626">14</div>
<div class="t" style="left:1px;width:27px;top:516px;height:21px;line-height:22px;text-align:center;font-size:14px;color:#262626">15</div>
<div class="t" style="left:1px;width:27px;top:537px;height:21px;line-height:22px;text-align:center;font-size:14px;color:#262626">16</div>
<div class="t" style="left:1px;width:27px;top:558px;height:21px;line-height:22px;text-align:center;font-size:14px;color:#262626">17</div>
<div class="t" style="left:1px;width:27px;top:579px;height:21px;line-height:22px;text-align:center;font-size:14px;color:#262626">18</div>
<div class="t" style="left:1px;width:27px;top:600px;height:21px;line-height:22px;text-align:center;font-size:14px;color:#262626">19</div>
<div class="t" style="left:1px;width:27px;top:621px;height:21px;line-height:22px;text-align:center;font-size:14px;color:#262626">20</div>
<div class="t" style="left:1px;width:27px;top:642px;height:21px;line-height:22px;text-align:center;font-size:14px;color:#262626">21</div>
<div class="a" style="left:266px;top:262px;width:142px;height:24px;background:transparent;border:2px solid #1e7145"></div>
<div class="a" style="left:403px;top:281px;width:7px;height:7px;background:#ffffff;"></div>
<div class="a" style="left:404px;top:282px;width:5px;height:5px;background:#1e7145;"></div>
<div class="t" style="left:340px;width:64px;top:265px;height:20px;line-height:20px;text-align:right;font-size:14.5px;color:#1a1a1a">10</div>
<div class="a" style="left:262px;top:256px;width:151px;height:37px;background:transparent;border:3px solid #ff0000;border-radius:10px"></div>
<div class="a" style="left:101px;top:668px;width:107px;height:23px;background:#ffffff;"></div>
<div class="a" style="left:100px;top:668px;width:1px;height:24px;background:#a6a6a6;"></div>
<div class="a" style="left:208px;top:668px;width:1px;height:24px;background:#a6a6a6;"></div>
<div class="a" style="left:100px;top:691px;width:109px;height:2px;background:#1e7145;"></div>
<svg style="left:26px;top:677px" width="36" height="9"><path d="M5 0.5V8.5L0.8 4.5Z" fill="#c3c3c3"/><path d="M30 0.5V8.5L34.2 4.5Z" fill="#c3c3c3"/></svg>
<div class="t" style="left:112.3px;top:671.5px;height:20px;line-height:20px;font-size:13.5px;color:#1e7145;font-weight:bold;transform:scaleX(0.9374);">microexcel.ru</div>
<div class="t" style="left:220.6px;top:671.5px;height:20px;line-height:20px;font-size:12.5px;color:#3c3c3c;transform:scaleX(0.9670);">Лист2</div>
<div class="a" style="left:266px;top:672px;width:1px;height:20px;background:#b0b0b0;"></div>
<svg style="left:299px;top:673px" width="18" height="18"><circle cx="9" cy="9" r="7.6" fill="none" stroke="#777" stroke-width="1.2"/><path d="M9 4.8V13.2M4.8 9H13.2" stroke="#777" stroke-width="1.7" fill="none"/></svg>
<div class="a" style="left:626px;top:677px;width:2px;height:2px;background:#b4b4b4;"></div>
<div class="a" style="left:626px;top:681px;width:2px;height:2px;background:#b4b4b4;"></div>
<div class="a" style="left:626px;top:685px;width:2px;height:2px;background:#b4b4b4;"></div>
<div class="a" style="left:658px;top:675px;width:352px;height:15px;background:#e9e9e9;background-image:repeating-conic-gradient(#d2d2d2 0 25%,#ececec 0 50%);background-size:2px 2px"></div>
<div class="a" style="left:643px;top:675px;width:15px;height:15px;background:#ffffff;border:1px solid #ababab"></div>
<div class="a" style="left:658px;top:675px;width:320px;height:15px;background:#ffffff;border:1px solid #ababab"></div>
<div class="a" style="left:1010px;top:675px;width:15px;height:15px;background:#ffffff;border:1px solid #ababab"></div>
<svg style="left:643px;top:675px" width="15" height="15"><path d="M9.3 3.8V11.2L4.9 7.5Z" fill="#606060"/></svg>
<svg style="left:1010px;top:675px" width="15" height="15"><path d="M5.7 3.8V11.2L10.1 7.5Z" fill="#606060"/></svg>
<div class="a" style="left:1026px;top:217px;width:15px;height:438px;background:#e9e9e9;background-image:repeating-conic-gradient(#d2d2d2 0 25%,#ececec 0 50%);background-size:2px 2px"></div>
<div class="a" style="left:1026px;top:203px;width:15px;height:15px;background:#ffffff;border:1px solid #ababab"></div>
<div class="a" style="left:1026px;top:218px;width:15px;height:415px;background:#ffffff;border:1px solid #ababab"></div>
<div class="a" style="left:1026px;top:654px;width:15px;height:15px;background:#ffffff;border:1px solid #ababab"></div>
<svg style="left:1026px;top:203px" width="15" height="15"><path d="M3.9 9.2H11.1L7.5 5Z" fill="#606060"/></svg>
<svg style="left:1026px;top:654px" width="15" height="15"><path d="M3.9 5.8H11.1L7.5 10Z" fill="#606060"/></svg>
<div class="a" style="left:0px;top:696px;width:1043px;height:1px;background:#c8c8c8;"></div>
<div class="a" style="left:0px;top:697px;width:1043px;height:21px;background:#f3f3f3;"></div>
<div class="t" style="left:8.6px;top:695.6px;height:20px;line-height:20px;font-size:11.5px;color:#3a3a3a;transform:scaleX(1.0024);">Готово</div>
<div class="a" style="left:744px;top:697px;width:38px;height:20px;background:#c6c6c6;"></div>
<svg style="left:72px;top:700px" width="14" height="13"><circle cx="3.2" cy="3.2" r="2.6" fill="#6a6a6a"/><rect x="6.5" y="1" width="6.5" height="2.4" fill="#6a6a6a"/><rect x="1.5" y="5" width="11.5" height="7.5" fill="none" stroke="#6a6a6a" stroke-width="1"/><path d="M3.2 7.2H5M6.4 7.2H8.2M9.6 7.2H11.4M3.2 9H5M6.4 9H8.2M9.6 9H11.4M3.2 10.8H5M6.4 10.8H8.2M9.6 10.8H11.4" stroke="#6a6a6a" stroke-width="1"/></svg>
<svg style="left:756px;top:700px" width="13" height="13"><rect x="0.5" y="0.5" width="12" height="12" fill="none" stroke="#6a6a6a"/><path d="M4.5 0V13M8.5 0V13M0 4.5H13M0 8.5H13" stroke="#6a6a6a" stroke-width="1" fill="none"/></svg>
<svg style="left:794px;top:700px" width="15" height="13"><rect x="0.5" y="0.5" width="13.5" height="12" fill="none" stroke="#6a6a6a"/><rect x="3.5" y="2.5" width="7.5" height="8" fill="none" stroke="#6a6a6a"/><path d="M5 5H10M5 6.8H10M5 8.6H10" stroke="#6a6a6a" stroke-width="0.9"/></svg>
<svg style="left:832px;top:700px" width="15" height="13"><rect x="0.5" y="0.5" width="13.5" height="12" fill="none" stroke="#6a6a6a"/><path d="M5.5 0.5V7.5M0.5 7.5H9.5V0.5" stroke="#6a6a6a" fill="none"/></svg>
<div class="a" style="left:863px;top:706px;width:6px;height:2px;background:#6a6a6a;"></div>
<div class="a" style="left:873px;top:707px;width:100px;height:1px;background:#9a9a9a;"></div>
<div class="a" style="left:921px;top:701px;width:5px;height:11px;background:#6a6468;"></div>
<div class="a" style="left:977px;top:706px;width:7px;height:2px;background:#6a6a6a;"></div>
<div class="a" style="left:979px;top:704px;width:2px;height:7px;background:#6a6a6a;"></div>
<div class="t" style="left:995.4px;top:696.3px;height:20px;line-height:20px;font-size:11px;color:#3a3a3a;transform:scaleX(0.9486);">100 %</div>
<div class="a" style="left:0px;top:0px;width:1px;height:718px;background:#c6c6c6;"></div>
<div class="a" style="left:1042px;top:0px;width:1px;height:718px;background:#c6c6c6;"></div>
<div class="a" style="left:0px;top:717px;width:1043px;height:1px;background:#c6c6c6;"></div>
<div class="a" style="left:0px;top:0px;width:1043px;height:1px;background:#dbd3d7;"></div>
<div class="a" style="left:0px;top:0px;width:1px;height:62px;background:#dbd3d7;"></div>
<div class="a" style="left:1042px;top:0px;width:1px;height:62px;background:#dbd3d7;"></div>
</div></body></html>
